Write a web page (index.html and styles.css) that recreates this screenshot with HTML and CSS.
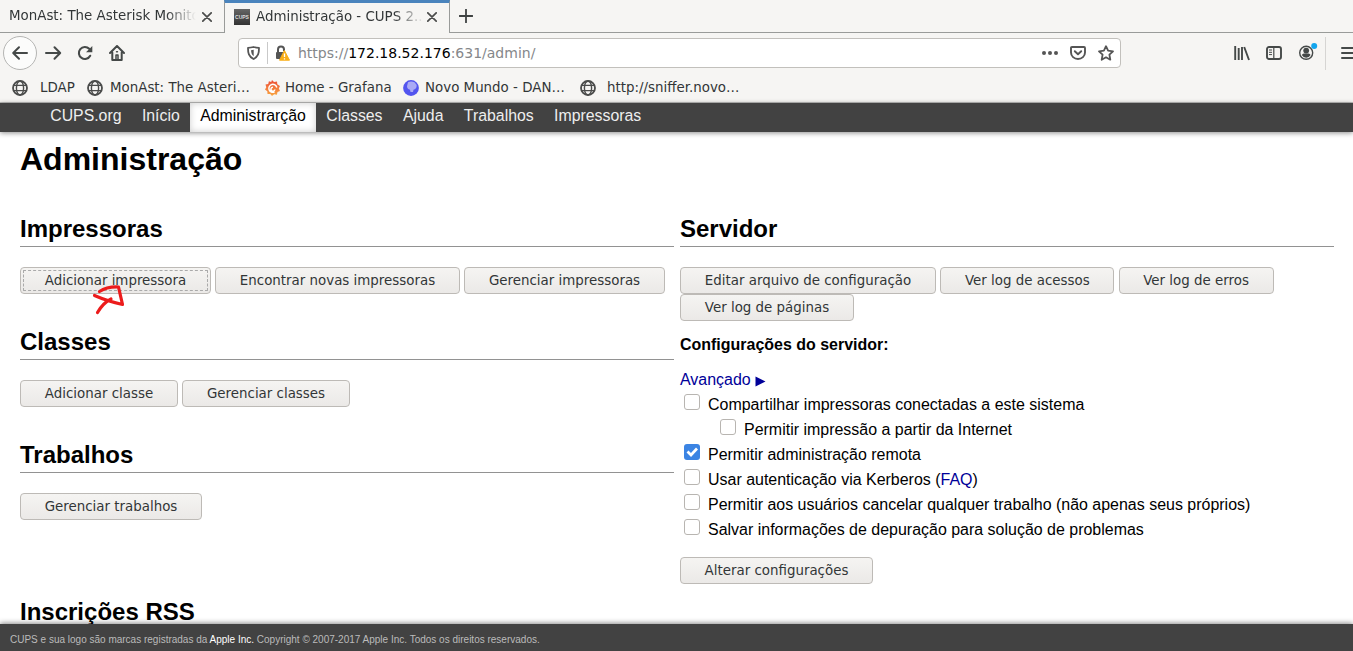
FILE: index.html
```html
<!DOCTYPE html>
<html lang="pt-BR">
<head>
<meta charset="utf-8">
<title>Administração - CUPS</title>
<link rel="stylesheet" href="styles.css">
</head>
<body>
<svg class="defs" width="0" height="0">
  <symbol id="globe" viewBox="0 0 16 16"><g fill="none" stroke="#4b4c4b" stroke-width="1.4"><circle cx="8" cy="8" r="7" stroke-width="1.8"/><ellipse cx="8" cy="8" rx="3.6" ry="7"/><path d="M1.8 5.4h12.4M1.8 10.6h12.4"/></g></symbol>
  <symbol id="close" viewBox="0 0 10 10"><path d="M.8.8l8.4 8.4M9.2.8L.8 9.2" stroke="#4b4c4b" stroke-width="1.7" stroke-linecap="round"/></symbol>
</svg>

<div class="browser">
  <div class="tabs">
    <div class="tab"><span class="tab-title">MonAst: The Asterisk Monito</span><svg class="close"><use href="#close"/></svg></div>
    <div class="tab active"><span class="favicon">CUPS</span><span class="tab-title">Administração - CUPS 2..</span><svg class="close"><use href="#close"/></svg></div>
    <div class="new-tab"><svg width="14" height="14" viewBox="0 0 14 14"><path d="M7 .5v13M.5 7h13" stroke="#3f4242" stroke-width="1.8" stroke-linecap="round"/></svg></div>
  </div>

  <div class="toolbar">
    <div class="back"><svg width="18" height="16" viewBox="0 0 18 16" fill="none" stroke="#454948" stroke-width="2" stroke-linecap="round" stroke-linejoin="round"><path d="M16 8H2.500M8 2.200L2.200 8 8 13.800"/></svg></div>
    <svg class="forward" width="18" height="16" viewBox="0 0 18 16" fill="none" stroke="#454948" stroke-width="2" stroke-linecap="round" stroke-linejoin="round"><path d="M1 8h14M9.500 2.200L15.200 8 9.500 13.800"/></svg>
    <svg class="reload" width="16" height="16" viewBox="0 0 16 16"><path d="M12.200 3.800A6 6 0 1 0 13.200 10.800" fill="none" stroke="#454948" stroke-width="2.100" stroke-linecap="round"/><path d="M15.300 1v6.200H9z" fill="#454948"/></svg>
    <svg class="home" width="16" height="16" viewBox="0 0 16 16" fill="none" stroke="#454948" stroke-width="2" stroke-linecap="round" stroke-linejoin="round"><path d="M1 8l7-7 7 7M3.300 7.500V15h9.400V7.500"/><path d="M7 14.500V10h2v4.500" stroke-width="1.500"/><path d="M7.600 6.800h.8" stroke-width="1.600"/></svg>
    <div class="urlbar">
      <svg class="shield" width="13" height="14" viewBox="0 0 13 14"><path d="M6.500 1C4.800 1.500 3 1.800 1 1.900c0 5 .6 8.400 5.500 11.100C11.400 10.300 12 6.900 12 1.900 10 1.800 8.200 1.500 6.500 1z" fill="none" stroke="#555" stroke-width="1.800" stroke-linejoin="round"/><path d="M6.700 3.700v6.500C4.700 8.700 4.200 6.800 4 4.200z" fill="#555"/></svg>
      <span class="divider"></span>
      <svg class="lock" width="15" height="16" viewBox="0 0 15 16"><path d="M3 7.500V4.500a3 3 0 0 1 6 0v1.500" fill="none" stroke="#555" stroke-width="2"/><rect x="1" y="7" width="9" height="7" rx="1" fill="#555"/><path d="M9.400 5.500L14.500 15.200H4.500z" fill="#f9ae18" stroke="#f9ae18" stroke-linejoin="round"/><path d="M9.500 8.500v3.500m0 1.200v1.300" stroke="#fff" stroke-width="1.300"/></svg>
      <span class="url">https://<b>172.18.52.176</b>:631/admin/</span>
      <svg class="dots" width="16" height="4" viewBox="0 0 16 4" fill="#555"><circle cx="2" cy="2" r="2"/><circle cx="8" cy="2" r="2"/><circle cx="14" cy="2" r="2"/></svg>
      <svg class="pocket" width="16" height="14" viewBox="0 0 16 14" fill="none" stroke="#555" stroke-width="1.900" stroke-linecap="round" stroke-linejoin="round"><path d="M2 1h12q1 0 1 1v4.500a7 6.500 0 0 1-14 0V2q0-1 1-1z"/><path d="M4.800 5.200L8 8.200l3.200-3"/></svg>
      <svg class="star" width="16" height="16" viewBox="0 0 16 16" fill="none" stroke="#555" stroke-width="1.800" stroke-linejoin="round"><path d="M8 1.200l2.100 4.500 4.900.6-3.600 3.400.9 5L8 12.300l-4.300 2.400.9-5L1 6.300l4.900-.6z"/></svg>
    </div>
    <svg class="library" width="16" height="15" viewBox="0 0 16 15" stroke="#454948" stroke-width="1.900"><path d="M1.200 0v14M4.700 2v12M8 1v13M10.200 1L15 14"/></svg>
    <svg class="sidebar" width="16" height="14" viewBox="0 0 16 14" fill="none" stroke="#454948"><rect x="1" y="1" width="14" height="12" rx="2" stroke-width="1.900"/><path d="M7.800 1v12" stroke-width="1.200"/><path d="M3 4h3M3 6.300h3M3 8.600h3"/></svg>
    <svg class="account" width="19" height="20" viewBox="0 0 19 20"><circle cx="7.200" cy="11.800" r="6.500" fill="none" stroke="#454948" stroke-width="1.400"/><circle cx="7.200" cy="9.600" r="2.900" fill="#454948"/><path d="M2.800 14q1-2 2.600-1.500h3.600q1.800-.4 2.600 1.500-1.600 2.800-4.400 2.800T2.800 14z" fill="#454948"/><circle cx="15.200" cy="5" r="3" fill="#12a5ee"/></svg>
    <span class="tool-divider"></span>
    <svg class="menu" width="12" height="12" viewBox="0 0 12 12" stroke="#454948" stroke-width="2" stroke-linecap="round"><path d="M1 1h14M1 6h14M1 11h14"/></svg>
  </div>

  <div class="bookmarks">
    <span class="bookmark ldap"><svg width="16" height="16"><use href="#globe"/></svg>LDAP</span>
    <span class="bookmark monast"><svg width="16" height="16"><use href="#globe"/></svg>MonAst: The Asteri…</span>
    <span class="bookmark grafana"><svg width="15" height="16" viewBox="0 0 15 16"><defs><linearGradient id="gf" x1="0" y1="0" x2="0" y2="1"><stop offset="0" stop-color="#ec4c37"/><stop offset="1" stop-color="#f9a942"/></linearGradient></defs><path d="M7 0l2 2 3-.6.3 2.800L15 6l-1.200 2.500L15 11l-2.500 1-.6 2.700-2.700-.5L7 16l-1.700-2.100-2.800.2-.2-2.800L0 9.500l1.300-2.300L.5 4.500 3.200 4l.7-2.700 2.300.8z" fill="url(#gf)"/><path d="M11.800 7.500A4 4 0 1 0 9.500 12M9.900 9.500a2 2 0 1 1-1.900-2.300" fill="none" stroke="#fff" stroke-width="1.500"/></svg>Home - Grafana</span>
    <span class="bookmark novo"><svg width="16" height="16" viewBox="0 0 16 16"><circle cx="8" cy="8" r="7.900" fill="#5355ef"/><path d="M5 2.300Q8 .8 11.500 2.300q2.600 2 2 5-1 2.400-3 2.500L10 12H7.500L7 9.700Q4 9 4 6.300z" fill="#aaaaf5"/></svg>Novo Mundo - DAN…</span>
    <span class="bookmark sniffer"><svg width="16" height="16"><use href="#globe"/></svg>http://sniffer.novo…</span>
  </div>
</div>

<nav class="site-nav">
  <a>CUPS.org</a><a>Início</a><a class="current">Administrarção</a><a>Classes</a><a>Ajuda</a><a>Trabalhos</a><a>Impressoras</a>
</nav>

<main class="page">
  <h1>Administração</h1>
  <div class="columns">
    <div class="column">
      <section>
        <h2>Impressoras</h2>
        <div class="buttons">
          <div class="marked"><button class="btn focused w190">Adicionar impressora</button><svg class="arrow" width="34" height="32" viewBox="0 0 34 32" fill="none" stroke="#ec1c1c" stroke-width="3.200" stroke-linecap="round" stroke-linejoin="round"><path d="M7.500 7.500Q15 2.500 26.500 3L30.500 20.500Q15 17 2.500 11.500M19 15Q11 19 5.500 28.500"/></svg></div>
          <button class="btn w245">Encontrar novas impressoras</button><button class="btn w201">Gerenciar impressoras</button>
        </div>
      </section>
      <section>
        <h2>Classes</h2>
        <div class="buttons"><button class="btn w158">Adicionar classe</button><button class="btn w168">Gerenciar classes</button></div>
      </section>
      <section>
        <h2>Trabalhos</h2>
        <div class="buttons"><button class="btn w182">Gerenciar trabalhos</button></div>
      </section>
    </div>
    <div class="column">
      <h2>Servidor</h2>
      <div class="buttons">
        <button class="btn w256">Editar arquivo de configuração</button><button class="btn w174">Ver log de acessos</button><button class="btn w155">Ver log de erros</button><button class="btn w174">Ver log de páginas</button>
      </div>
      <p class="settings-title">Configurações do servidor:</p>
      <a class="advanced">Avançado <svg width="11" height="11" viewBox="0 0 11 11"><path d="M.5.500L10.500 5.500.5 10.500z" fill="#000099"/></svg></a>
      <div class="options">
        <label><i class="box"></i>Compartilhar impressoras conectadas a este sistema</label>
        <label class="nested"><i class="box"></i>Permitir impressão a partir da Internet</label>
        <label><i class="box checked"><svg width="16" height="16" viewBox="0 0 16 16"><path d="M3.500 7.500l3.500 3.500 6-6.500" fill="none" stroke="#fff" stroke-width="2.700"/></svg></i>Permitir administração remota</label>
        <label><i class="box"></i>Usar autenticação via Kerberos (<a>FAQ</a>)</label>
        <label><i class="box"></i>Permitir aos usuários cancelar qualquer trabalho (não apenas seus próprios)</label>
        <label><i class="box"></i>Salvar informações de depuração para solução de problemas</label>
      </div>
      <button class="btn w193">Alterar configurações</button>
    </div>
  </div>
  <h2>Inscrições RSS</h2>
</main>

<footer>CUPS e sua logo são marcas registradas da <a>Apple Inc.</a> Copyright © 2007-2017 Apple Inc. Todos os direitos reservados.</footer>
</body>
</html>
```
FILE: styles.css
```css
* { box-sizing: border-box; }
body {
  margin: 0;
  height: 651px;
  display: flex;
  flex-direction: column;
  overflow: hidden;
  background: #fff;
  color: #000;
  font: 15.98px/25px "Liberation Sans", Arial, sans-serif;
}
svg { display: block; flex: none; }
.defs { position: absolute; }

/* Browser window */
.browser {
  flex: none;
  height: 103px;
  background: #f6f5f3;
  border-bottom: 1px solid #bfbfbe;
  color: #323637;
  font: 13.400px/20px "DejaVu Sans", sans-serif;
  white-space: nowrap;
}
.tabs { display: flex; height: 33px; }
.tab {
  display: flex;
  align-items: center;
  width: 224px;
  padding: 0 12px 0 9px;
  border-bottom: 1px solid #999b99;
}
.tab-title {
  flex: 1;
  min-width: 0;
  margin-right: 6px;
  -webkit-mask-image: linear-gradient(to left, transparent, #000 30px);
  mask-image: linear-gradient(to left, transparent, #000 30px);
}
.tab.active {
  width: 226px;
  padding: 0 12px 3px 9px;
  border: 1px solid #999b99;
  border-width: 3px 1px 0;
  border-top-color: #4a84bd;
}
.active .tab-title { margin-right: 3px; }
.close { width: 10px; height: 10px; margin-top: 1px; }
.favicon {
  width: 16px;
  height: 16px;
  margin-right: 6px;
  background: linear-gradient(#666, #333);
  color: #ddd;
  font: bold 5px/16px "Liberation Sans", sans-serif;
  text-align: center;
}
.new-tab {
  flex: 1;
  padding: 9px 0 0 9px;
  border-bottom: 1px solid #999b99;
}
.toolbar { display: flex; align-items: center; height: 40px; }
.back {
  display: flex;
  align-items: center;
  justify-content: center;
  width: 34px;
  height: 34px;
  margin-left: 3px;
  border: 1px solid #b5b5b3;
  border-radius: 50%;
  background: #fcfcfb;
}
.forward { margin-left: 8px; }
.reload { margin-left: 14px; }
.home { margin-left: 16px; }
.urlbar {
  display: flex;
  align-items: center;
  width: 883px;
  height: 30px;
  margin-left: 113px;
  padding: 0 6px 0 8px;
  border: 1px solid #c2c0bc;
  border-radius: 4px;
  background: #fff;
}
.divider { width: 1px; height: 22px; margin: 0 7px; background: #c9c9c9; }
.url { flex: 1; margin-left: 8px; color: #85878a; font-size: 14px; }
.url b { color: #000; font-weight: 400; }
.pocket { margin-left: 12px; }
.star { margin-left: 12px; }
.library { margin-left: 113px; }
.sidebar { margin-left: 16px; }
.account { margin: -5px 0 0 17px; }
.tool-divider { width: 1px; height: 33px; margin-left: 7px; background: #d6d5d3; }
.menu { margin-left: 15px; }
.bookmarks { display: flex; height: 29px; padding-left: 12px; }
.bookmark { display: flex; align-items: center; height: 30px; gap: 7px; }
.ldap { gap: 12px; width: 75px; }
.monast { width: 178px; }
.grafana { gap: 5px; width: 138px; }
.novo { gap: 6px; width: 177px; }
.sniffer { gap: 11px; }

/* CUPS page */
.site-nav {
  position: relative;
  z-index: 1;
  display: flex;
  flex: none;
  height: 29px;
  padding-left: 40px;
  background: #424242;
  box-shadow: 0 1px 5px rgba(0, 0, 0, .45);
}
.site-nav a { padding: 0 10.200px; color: #eee; font-size: 15.850px; }
.site-nav .current {
  background: #fff;
  color: #000;
  box-shadow: inset 0 0 7px rgba(0, 0, 0, .2);
}
.page { flex: 1; min-height: 0; overflow: hidden; padding: 0 19px 0 20px; }
h1 { margin: 9px 0 0; font-size: 32px; line-height: 36px; }
h2 {
  margin: 0 0 20px;
  height: 31px;
  border-bottom: 1px solid #929292;
  font-size: 24px;
  line-height: 26px;
}
.columns { display: grid; grid-template-columns: 654px 654px; gap: 6px; height: 383px; margin-top: 39px; }
.page > h2 { width: 1314px; }
section { height: 113px; }
.buttons { display: flex; flex-wrap: wrap; column-gap: 4px; }
.column > .buttons { column-gap: 4.300px; }
.btn {
  display: block;
  height: 27px;
  padding: 0;
  border: 1px solid #bdbab6;
  border-radius: 4px;
  background: linear-gradient(#f5f4f2, #ebe9e7);
  color: #323637;
  font: 13.400px/23px "DejaVu Sans", sans-serif;
  white-space: nowrap;
}
.w155 { width: 155px; }
.w158 { width: 158px; }
.w168 { width: 168px; }
.w174 { width: 174px; }
.w182 { width: 182px; }
.w190 { width: 191px; }
.w193 { width: 193px; }
.w201 { width: 201px; }
.w245 { width: 245px; }
.w256 { width: 256px; }
.focused { outline: 1px dashed #aaa; outline-offset: -4px; }
.marked { position: relative; height: 27px; }
.arrow { position: absolute; left: 72px; top: 17px; z-index: 2; }
.settings-title { margin: 11px 0 10px; font-weight: 700; }
.advanced { display: flex; align-items: center; gap: 4px; color: #000099; }
.advanced svg { margin-top: 4px; }
.options label { display: flex; height: 25px; padding-left: 4px; }
.options .nested { padding-left: 40px; }
.options a { color: #000099; }
.box {
  flex: none;
  width: 16px;
  height: 16px;
  margin: 2px 8px 0 0;
  border: 1px solid #b8b5b1;
  border-radius: 3px;
  background: #fff;
}
.box.checked { border: 0; background: #3b84e3; }
.options { height: 165px; }
footer {
  position: relative;
  z-index: 1;
  flex: none;
  height: 27px;
  padding-left: 10px;
  background: #424242;
  box-shadow: 0 -1px 5px rgba(0, 0, 0, .45);
  color: #bbb;
  font-size: 10px;
  line-height: 31px;
}
footer a { color: #fff; }
```
